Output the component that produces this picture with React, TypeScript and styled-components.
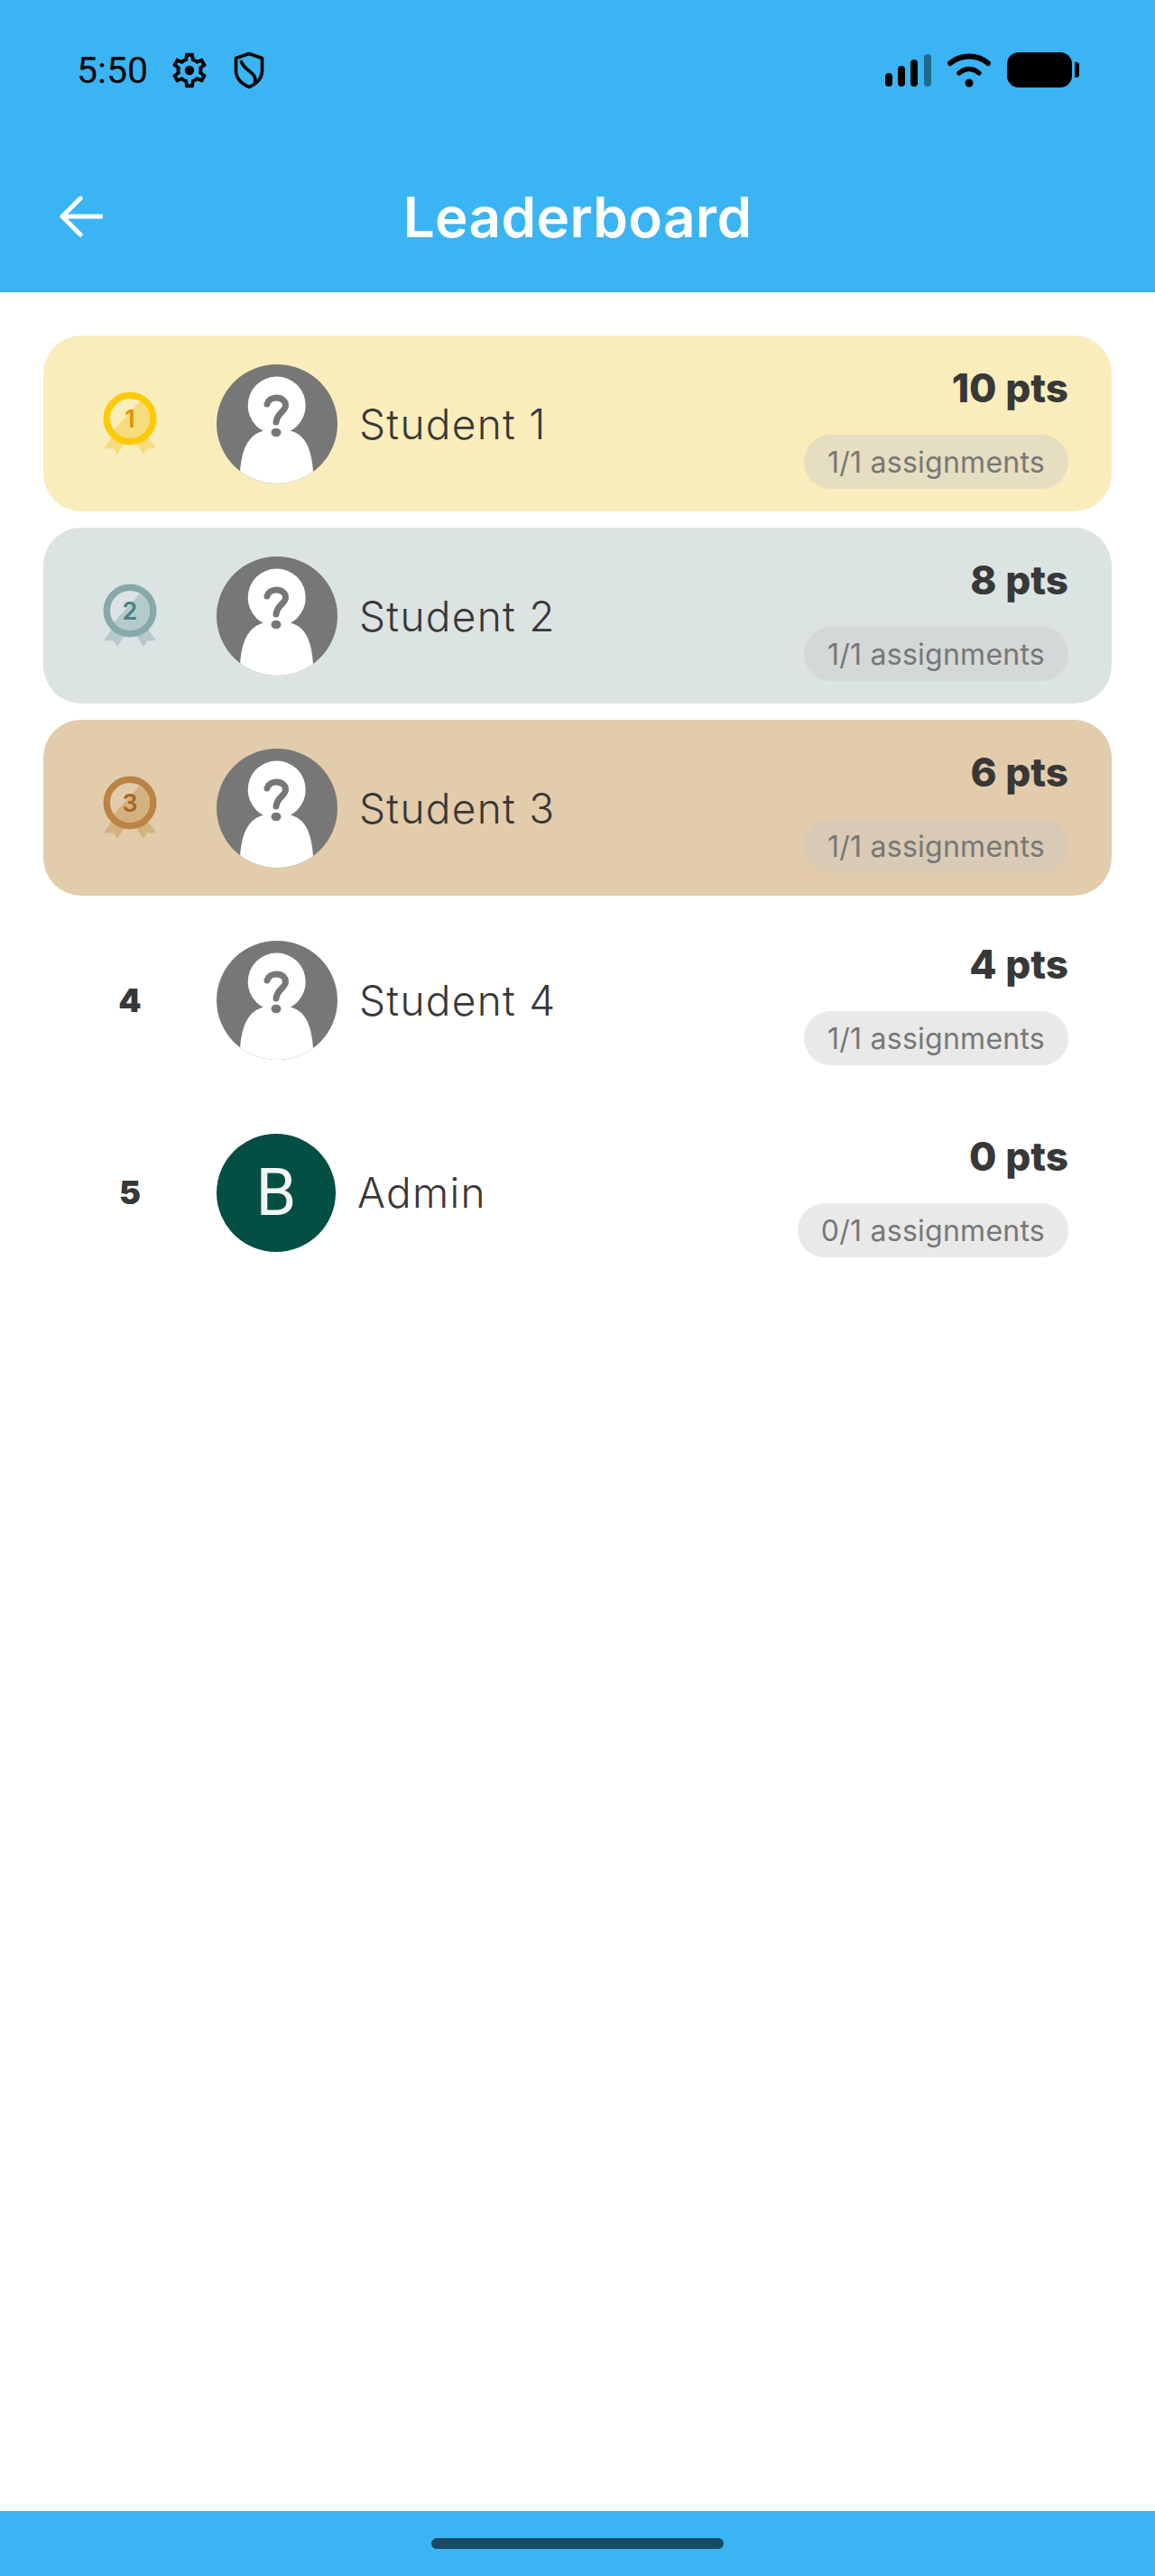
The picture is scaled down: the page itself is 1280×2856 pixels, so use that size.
import styled, { createGlobalStyle } from "styled-components";

const GlobalStyle = createGlobalStyle`
    html, body {
        margin: 0;
        padding: 0;
        background: #fff;
    }
`;

const Page = styled.div`
    width: 1280px;
    height: 2856px;
    display: flex;
    flex-direction: column;
    font-family: Inter, "Noto Sans", sans-serif;
    color: #383838;
`;
const Header = styled.header`
    height: 324px;
    flex-shrink: 0;
    background: #3bb4f4;
`;
const StatusBar = styled.div`
    height: 155px;
    padding: 0 84px 0 85px;
    box-sizing: border-box;
    display: flex;
    align-items: center;
    justify-content: space-between;
`;
const StatusGroup = styled.div`
    display: flex;
    align-items: center;
`;
const Time = styled.span`
    font-family: Roboto, sans-serif;
    font-size: 41px;
    color: #000;
    width: 102px;
`;
const Toolbar = styled.div`
    height: 169px;
    display: grid;
    grid-template-columns: 1fr auto 1fr;
    align-items: center;
`;
const BackButton = styled.div`
    padding-left: 66px;
    display: flex;
`;
const Title = styled.h1`
    margin: 2px 0 0;
    font-size: 62px;
    font-weight: 600;
    line-height: 1;
    letter-spacing: 0.3px;
    color: #fff;
`;
const List = styled.main`
    flex: 1;
    padding: 48px 48px 0;
    display: flex;
    flex-direction: column;
    gap: 18.2px;
`;
const tones: Record<string, string> = {
    gold: "#faedbc",
    silver: "#dbe3e3",
    bronze: "#e3ccab",
    none: "transparent",
};
const Row = styled.div<{ $tone: string }>`
    height: 195px;
    flex-shrink: 0;
    padding-right: 48px;
    border-radius: 42px;
    display: flex;
    align-items: center;
    background: ${props => tones[props.$tone]};
`;
const RankCell = styled.div`
    width: 192px;
    flex-shrink: 0;
    display: flex;
    justify-content: center;
`;
const RankNumber = styled.span`
    font-size: 36px;
    font-weight: 900;
    line-height: 1;
`;
const Avatar = styled.div`
    width: 134px;
    height: 132px;
    flex-shrink: 0;
    border-radius: 50%;
    overflow: hidden;
    background: #777;
    display: flex;
`;
const LetterAvatar = styled.div`
    width: 132px;
    height: 131px;
    flex-shrink: 0;
    border-radius: 50%;
    background: #034f43;
    color: #f2f7f6;
    font-family: Roboto, sans-serif;
    font-size: 72px;
    font-weight: 400;
    display: flex;
    align-items: center;
    justify-content: center;
`;
const Name = styled.span`
    flex: 1;
    margin-left: 24px;
    font-size: 46px;
    font-weight: 350;
    letter-spacing: 1.3px;
    line-height: 1;
`;
const Score = styled.div`
    margin-top: 4px;
    display: flex;
    flex-direction: column;
    align-items: flex-end;
    gap: 24px;
`;
const Points = styled.span`
    font-size: 44px;
    font-weight: 800;
    line-height: 56px;
`;
const Pill = styled.span`
    height: 60px;
    padding: 0 26px;
    border-radius: 30px;
    background: rgba(199, 199, 199, 0.39);
    color: #777;
    font-size: 32px;
    letter-spacing: 0.25px;
    line-height: 62px;
`;
const Footer = styled.footer`
    height: 72px;
    flex-shrink: 0;
    background: #3bb4f4;
    display: flex;
    align-items: center;
    justify-content: center;
`;
const HomeHandle = styled.div`
    width: 324px;
    height: 12px;
    border-radius: 6px;
    background: #1a4a63;
`;
const Icon = styled.svg<{ $gap?: number }>`
    display: block;
    flex-shrink: 0;
    margin-right: ${props => props.$gap ?? 0}px;
`;

const GEAR =
    "M19.43 12.98c.04-.32.07-.64.07-.98 0-.34-.03-.66-.07-.98l2.11-1.65c.19-.15.24-.42.12-.64l-2-3.46c-.09-.16-.26-.25-.44-.25-.06 0-.12.01-.17.03l-2.49 1c-.52-.4-1.08-.73-1.69-.98l-.38-2.65C14.46 2.18 14.25 2 14 2h-4c-.25 0-.46.18-.49.42l-.38 2.65c-.61.25-1.17.59-1.69.98l-2.49-1c-.06-.02-.12-.03-.18-.03-.17 0-.34.09-.43.25l-2 3.46c-.13.22-.07.49.12.64l2.11 1.65c-.04.32-.07.65-.07.98 0 .33.03.66.07.98l-2.11 1.65c-.19.15-.24.42-.12.64l2 3.46c.09.16.26.25.44.25.06 0 .12-.01.17-.03l2.49-1c.52.4 1.08.73 1.69.98l.38 2.65c.03.24.24.42.49.42h4c.25 0 .46-.18.49-.42l.38-2.65c.61-.25 1.17-.59 1.69-.98l2.49 1c.06.02.12.03.18.03.17 0 .34-.09.43-.25l2-3.46c.12-.22.07-.49-.12-.64l-2.11-1.65zm-1.98-1.71c.04.31.05.52.05.73 0 .21-.02.43-.05.73l-.14 1.13.89.7 1.08.84-.7 1.21-1.27-.51-1.04-.42-.9.68c-.43.32-.84.56-1.25.73l-1.06.43-.16 1.13-.2 1.35h-1.4l-.19-1.35-.16-1.13-1.06-.43c-.43-.18-.83-.41-1.23-.71l-.91-.7-1.06.43-1.27.51-.7-1.21 1.08-.84.89-.7-.14-1.13c-.03-.31-.05-.54-.05-.74s.02-.43.05-.73l.14-1.13-.89-.7-1.08-.84.7-1.21 1.27.51 1.04.42.9-.68c.43-.32.84-.56 1.25-.73l1.06-.43.16-1.13.2-1.35h1.39l.19 1.35.16 1.13 1.06.43c.43.18.83.41 1.23.71l.91.7 1.06-.43 1.27-.51.7 1.21-1.07.85-.89.7.14 1.13z";

function StatusIcons() {
    return (
        <>
            <Icon width="46" height="46" viewBox="0 0 24 24" $gap={26}>
                <path d={GEAR} fill="#000" />
                <circle cx="12" cy="12" r="2.7" fill="#000" />
            </Icon>
            <Icon width="34" height="42" viewBox="0 0 34 42" fill="none" stroke="#000" strokeWidth="3.6" strokeLinejoin="round">
                <path d="M17 2.5 L31.5 7.5 V21 C31.5 30 25 36 17 39.5 C9 36 2.5 30 2.5 21 V7.5 Z" />
                <path d="M8 10 C10 18 16 20 21 25 C24 28 25 31 23 36" />
            </Icon>
        </>
    );
}

function SystemIcons() {
    return (
        <>
            <Icon width="52" height="36" viewBox="0 0 52 36" $gap={17}>
                <rect x="0" y="21" width="8" height="15" rx="4" />
                <rect x="14" y="13" width="8" height="23" rx="4" />
                <rect x="28" y="6" width="8" height="30" rx="4" />
                <rect x="43" y="0" width="8" height="36" rx="4" fill="#1f6a8f" />
            </Icon>
            <Icon width="48" height="38" viewBox="0 0 48 38" fill="none" stroke="#000" strokeLinecap="round" $gap={18}>
                <path d="M3 11 C15 1 33 1 45 11" strokeWidth="6" />
                <path d="M13 22 C20 16 28 16 35 22" strokeWidth="5.5" />
                <circle cx="24" cy="33" r="4.5" fill="#000" stroke="none" />
            </Icon>
            <Icon width="80" height="40" viewBox="0 0 80 40">
                <rect x="0" y="0" width="72" height="39" rx="13" />
                <path d="M75 11 h2 a3 3 0 0 1 3 3 v11 a3 3 0 0 1 -3 3 h-2 Z" />
            </Icon>
        </>
    );
}

function BackArrow() {
    return (
        <svg width="48" height="46" viewBox="0 0 48 46" fill="none" stroke="#fff" strokeWidth="5" strokeLinecap="round" strokeLinejoin="round">
            <path d="M3 23 H46 M23 3 L3 23 L23 43" />
        </svg>
    );
}

const medals: Record<number, { ring: string; inner: string; digit: string }> = {
    1: { ring: "#fdcb06", inner: "#f5dc7e", digit: "#e88f00" },
    2: { ring: "#87a9a9", inner: "#b6caca", digit: "#4a8284" },
    3: { ring: "#b98445", inner: "#d4b27f", digit: "#a66a1e" },
};

function Medal({ rank }: { rank: number }) {
    const c = medals[rank];
    return (
        <svg width="100" height="100" viewBox="0 0 100 100">
            <path d="M32 62 L21 77 L32 77.5 L36 84 L45 70 Z M68 62 L79 77 L69 77.5 L65 84 L56 70 Z" fill={c.inner} />
            <path d="M61 25 A22 22 0 1 1 32 57 Z" fill={c.inner} />
            <circle cx="50" cy="44" r="25.75" fill="none" stroke={c.ring} strokeWidth="7.5" />
            <text x="50" y="54" textAnchor="middle" fontFamily="Inter, sans-serif" fontWeight="600" fontSize="27" fill={c.digit}>
                {rank}
            </text>
        </svg>
    );
}

function Silhouette() {
    return (
        <svg width="134" height="132" viewBox="0 0 134 132">
            <circle cx="66.7" cy="45.5" r="32" fill="#fff" />
            <path d="M26 119 C28 92 36 78 52 73.5 L82 73.5 C98 78 105 92 107 119 V132 H26 Z" fill="#fff" />
            <path d="M56 44 C57 40 61 37 66.5 37 C72 37 76.5 40.5 76.5 45.5 C76.5 52 67 54 66 64" fill="none" stroke="#777" strokeWidth="7" strokeLinecap="round" />
            <ellipse cx="66" cy="75.5" rx="5.5" ry="4.8" fill="#777" />
        </svg>
    );
}

const students = [
    { rank: 1, name: "Student 1", points: 10, done: 1, tone: "gold" },
    { rank: 2, name: "Student 2", points: 8, done: 1, tone: "silver" },
    { rank: 3, name: "Student 3", points: 6, done: 1, tone: "bronze" },
    { rank: 4, name: "Student 4", points: 4, done: 1, tone: "none" },
    { rank: 5, name: "Admin", points: 0, done: 0, tone: "none", letter: "B" },
];

function App() {
    return (
        <Page>
            <GlobalStyle />
            <Header>
                <StatusBar>
                    <StatusGroup>
                        <Time>5:50</Time>
                        <StatusIcons />
                    </StatusGroup>
                    <StatusGroup>
                        <SystemIcons />
                    </StatusGroup>
                </StatusBar>
                <Toolbar>
                    <BackButton>
                        <BackArrow />
                    </BackButton>
                    <Title>Leaderboard</Title>
                </Toolbar>
            </Header>
            <List>
                {students.map(s => (
                    <Row key={s.rank} $tone={s.tone}>
                        <RankCell>
                            {s.rank <= 3 ? <Medal rank={s.rank} /> : <RankNumber>{s.rank}</RankNumber>}
                        </RankCell>
                        {s.letter ? <LetterAvatar>{s.letter}</LetterAvatar> : <Avatar><Silhouette /></Avatar>}
                        <Name>{s.name}</Name>
                        <Score>
                            <Points>{s.points} pts</Points>
                            <Pill>{s.done}/1 assignments</Pill>
                        </Score>
                    </Row>
                ))}
            </List>
            <Footer>
                <HomeHandle />
            </Footer>
        </Page>
    );
}
export default App;
